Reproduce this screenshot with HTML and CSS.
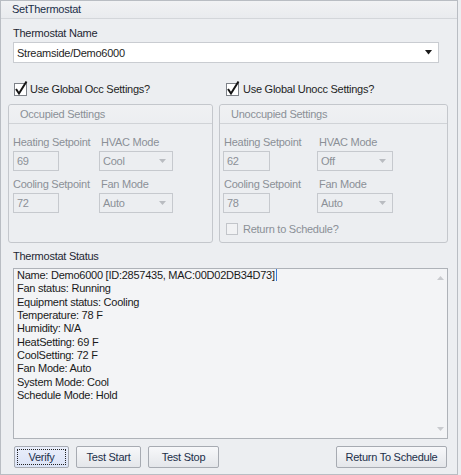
FILE: index.html
```html
<!DOCTYPE html>
<html>
<head>
<meta charset="utf-8">
<link rel="stylesheet" href="styles.css">
</head>
<body>
<div class="panel">
  <div class="titlebar">SetThermostat</div>
  <div class="content">
    <div class="label name-label">Thermostat Name</div>
    <div class="combo">
      <span class="combo-text">Streamside/Demo6000</span>
      <svg class="combo-arrow" width="8" height="5" viewBox="0 0 8 5"><path d="M0 0H7L3.5 4.5Z" fill="#1a1a1a"/></svg>
    </div>
    <div class="checks">
      <div class="check occ-check">
        <svg class="cb" width="13" height="13" viewBox="0 0 13 13"><rect x="0.5" y="0.5" width="12" height="12" fill="#fff" stroke="#7d8188"/><path d="M2 6 L5 10.5 L12.5 -1.5" fill="none" stroke="#151515" stroke-width="2"/></svg>
        <span>Use Global Occ Settings?</span>
      </div>
      <div class="check unocc-check">
        <svg class="cb" width="13" height="13" viewBox="0 0 13 13"><rect x="0.5" y="0.5" width="12" height="12" fill="#fff" stroke="#7d8188"/><path d="M2 6 L5 10.5 L12.5 -1.5" fill="none" stroke="#151515" stroke-width="2"/></svg>
        <span>Use Global Unocc Settings?</span>
      </div>
    </div>
    <div class="groups">
      <div class="group occ">
        <div class="group-head">Occupied Settings</div>
        <div class="group-body">
          <div class="field-grid">
            <div class="field"><div class="flabel">Heating Setpoint</div><div class="input">69</div></div>
            <div class="field"><div class="flabel">HVAC Mode</div><div class="select"><span>Cool</span><svg width="7" height="4" viewBox="0 0 7 4"><path d="M0 0H7L3.5 4Z" fill="#b9bcc1"/></svg></div></div>
            <div class="field"><div class="flabel">Cooling Setpoint</div><div class="input">72</div></div>
            <div class="field"><div class="flabel">Fan Mode</div><div class="select"><span>Auto</span><svg width="7" height="4" viewBox="0 0 7 4"><path d="M0 0H7L3.5 4Z" fill="#b9bcc1"/></svg></div></div>
          </div>
        </div>
      </div>
      <div class="group unocc">
        <div class="group-head">Unoccupied Settings</div>
        <div class="group-body">
          <div class="field-grid">
            <div class="field"><div class="flabel">Heating Setpoint</div><div class="input">62</div></div>
            <div class="field"><div class="flabel">HVAC Mode</div><div class="select"><span>Off</span><svg width="7" height="4" viewBox="0 0 7 4"><path d="M0 0H7L3.5 4Z" fill="#b9bcc1"/></svg></div></div>
            <div class="field"><div class="flabel">Cooling Setpoint</div><div class="input">78</div></div>
            <div class="field"><div class="flabel">Fan Mode</div><div class="select"><span>Auto</span><svg width="7" height="4" viewBox="0 0 7 4"><path d="M0 0H7L3.5 4Z" fill="#b9bcc1"/></svg></div></div>
          </div>
          <div class="check disabled-check">
            <svg class="cb" width="12" height="12" viewBox="0 0 12 12"><rect x="0.5" y="0.5" width="11" height="11" fill="#f1f2f4" stroke="#c2c5ca"/></svg>
            <span>Return to Schedule?</span>
          </div>
        </div>
      </div>
    </div>
    <div class="label status-label">Thermostat Status</div>
    <div class="status">
      <div class="status-text">
        <div>Name: Demo6000 [ID:2857435, MAC:00D02DB34D73]<span class="caret"></span></div>
        <div>Fan status: Running</div>
        <div>Equipment status: Cooling</div>
        <div>Temperature: 78 F</div>
        <div>Humidity: N/A</div>
        <div>HeatSetting: 69 F</div>
        <div>CoolSetting: 72 F</div>
        <div>Fan Mode: Auto</div>
        <div>System Mode: Cool</div>
        <div>Schedule Mode: Hold</div>
      </div>
      <div class="scroll">
        <svg width="7" height="4" viewBox="0 0 7 4"><path d="M0 4H7L3.5 0Z" fill="#c9cbcf"/></svg>
        <svg width="7" height="4" viewBox="0 0 7 4"><path d="M0 0H7L3.5 4Z" fill="#c9cbcf"/></svg>
      </div>
    </div>
    <div class="buttons">
      <div class="btn verify"><span class="focus">Verify</span></div>
      <div class="btn start">Test Start</div>
      <div class="btn stop">Test Stop</div>
      <div class="spacer"></div>
      <div class="btn ret">Return To Schedule</div>
    </div>
  </div>
</div>
</body>
</html>
```

FILE: styles.css
```css
html, body {
  margin: 0;
  padding: 0;
  background: #eceef1;
}
body {
  width: 461px;
  height: 475px;
  font-family: "Liberation Sans", Arial, sans-serif;
  font-size: 11px;
  letter-spacing: -0.25px;
  color: #1e1e1e;
}
.panel {
  box-sizing: border-box;
  width: 458px;
  height: 475px;
  border: 1px solid #b9bdc3;
  background: #eceef1;
  display: flex;
  flex-direction: column;
}
.titlebar {
  height: 17px;
  line-height: 17px;
  padding-left: 11px;
  color: #1b2f4a;
  font-size: 11px;
  background: linear-gradient(#f1f2f4, #e9ebee);
  border-bottom: 1px solid #d3d6da;
}
.content {
  padding: 7px 9px 0 7px;
  display: flex;
  flex-direction: column;
}
.label {
  line-height: 14px;
  height: 14px;
  padding-left: 5px;
  color: #1e2733;
}
.combo {
  margin: 2px 9px 0 5px;
  box-sizing: border-box;
  height: 21px;
  background: #fff;
  border: 1px solid #c9ccd1;
  display: flex;
  align-items: center;
  justify-content: space-between;
  padding: 0 3px 0 3px;
}
.combo-arrow {
  margin-right: 2px;
}
.checks {
  margin-top: 19px;
  display: grid;
  grid-template-columns: 205px 229px;
  column-gap: 6px;
  height: 14px;
}
.check {
  display: flex;
  align-items: center;
  height: 14px;
  line-height: 14px;
}
.check .cb {
  overflow: visible;
  flex: none;
}
.occ-check {
  padding-left: 6px;
}
.occ-check span {
  margin-left: 3px;
}
.unocc-check {
  padding-left: 7px;
}
.unocc-check span {
  margin-left: 4px;
}
.groups {
  margin-top: 8px;
  display: grid;
  grid-template-columns: 205px 229px;
  column-gap: 6px;
}
.group {
  box-sizing: border-box;
  height: 139px;
  border: 1px solid #c4c7cc;
  border-radius: 3px;
  display: flex;
  flex-direction: column;
}
.group-head {
  height: 18px;
  line-height: 18px;
  padding-left: 11px;
  color: #8b9097;
  border-bottom: 1px solid #d0d3d7;
  background: linear-gradient(#f0f1f3, #eceef1);
  border-radius: 3px 3px 0 0;
}
.group-body {
  padding: 11px 0 0 4px;
  display: flex;
  flex-direction: column;
}
.field-grid {
  display: grid;
  row-gap: 6px;
}
.occ .field-grid {
  grid-template-columns: 86px 74px;
}
.unocc .field-grid {
  grid-template-columns: 93px 76px;
}
.flabel {
  line-height: 14px;
  height: 14px;
  margin-bottom: 2px;
  color: #8b9097;
  white-space: nowrap;
}
.field:nth-child(even) .flabel {
  padding-left: 2px;
}
.input, .select {
  box-sizing: border-box;
  height: 20px;
  border: 1px solid #c6c9ce;
  color: #8b9097;
  display: flex;
  align-items: center;
  padding-left: 3px;
  background: #eceef1;
}
.input {
  width: 46px;
}
.unocc .input {
  width: 47px;
  margin-left: -1px;
}
.select {
  justify-content: space-between;
  padding-right: 6px;
}
.disabled-check {
  margin-top: 9px;
  padding-left: 2px;
  color: #8b9097;
}
.disabled-check span {
  margin-left: 5px;
}
.status-label {
  margin-top: 6px;
}
.status {
  margin: 5px 0 0 5px;
  box-sizing: border-box;
  height: 171px;
  border: 1px solid #aeb2b8;
  background: #f3f4f6;
  display: flex;
}
.status-text {
  flex: 1;
  padding: 0 3px;
  line-height: 13.33px;
  color: #1a1a1a;
}
.caret {
  display: inline-block;
  width: 1px;
  height: 12px;
  background: #3d7bd6;
  vertical-align: -2px;
  margin-left: 1px;
}
.scroll {
  width: 14px;
  display: flex;
  flex-direction: column;
  justify-content: space-between;
  align-items: center;
  padding: 7px 0 7px;
}
.buttons {
  margin: 7px 0 0 6px;
  display: flex;
  gap: 7px;
  height: 22px;
}
.spacer {
  flex: 1;
}
.btn {
  box-sizing: border-box;
  height: 22px;
  border: 1px solid #a7abb2;
  border-radius: 2px;
  background: linear-gradient(#f7f8fa, #e4e6ea);
  display: flex;
  align-items: center;
  justify-content: center;
  color: #1c2f4a;
}
.verify {
  width: 55px;
  background: linear-gradient(#e9eefb, #dbe3f6);
  padding: 2px;
}
.verify .focus {
  flex: 1;
  align-self: stretch;
  border: 1px dotted #222;
  display: flex;
  align-items: center;
  justify-content: center;
}
.start {
  width: 65px;
}
.stop {
  width: 71px;
}
.ret {
  width: 111px;
  margin-right: 1px;
}
```
